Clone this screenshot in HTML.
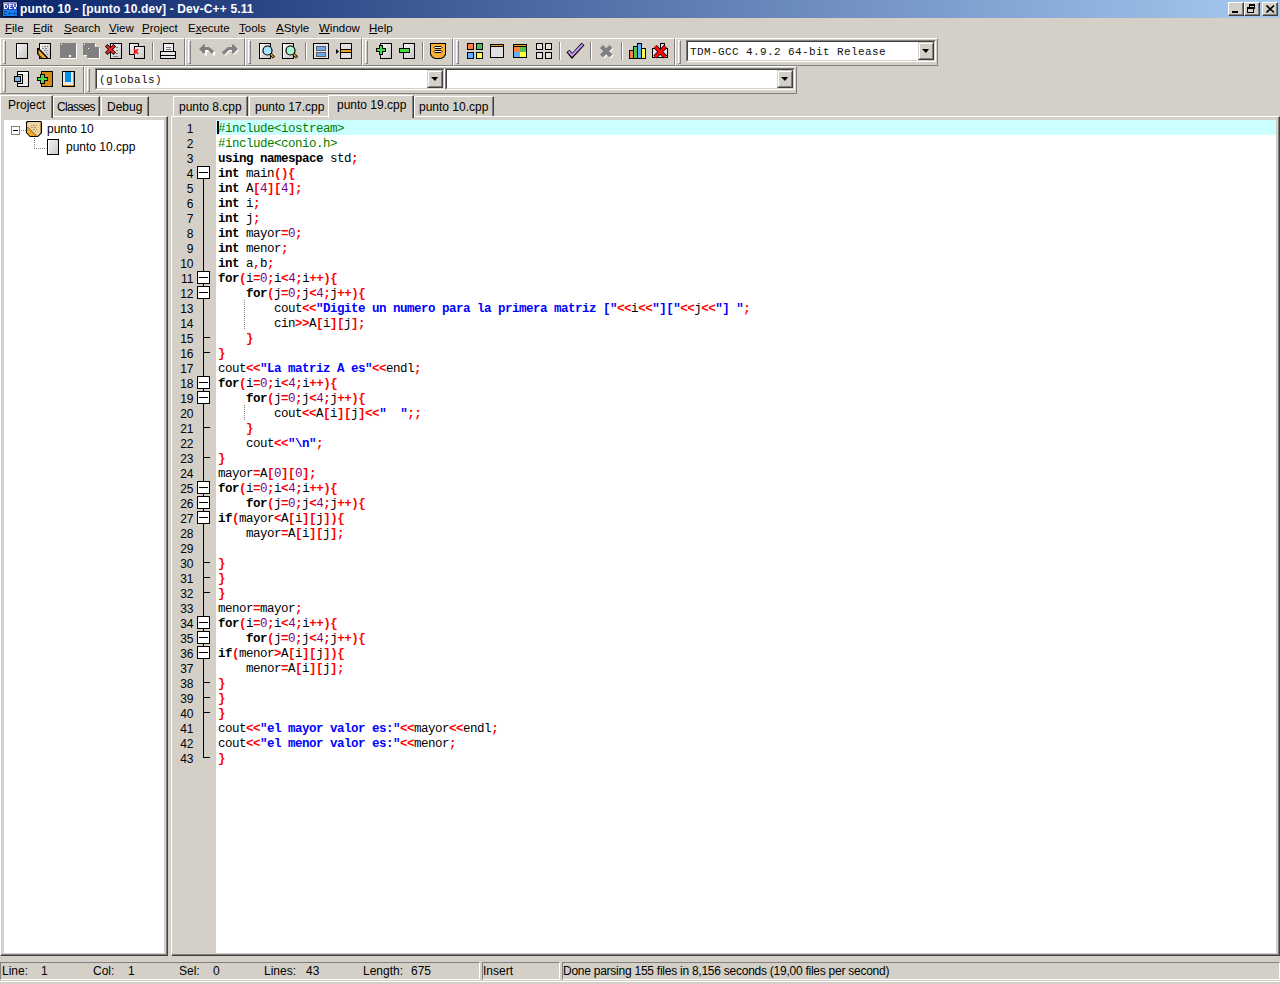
<!DOCTYPE html>
<html><head><meta charset="utf-8">
<style>
*{margin:0;padding:0;box-sizing:border-box}
html,body{width:1280px;height:984px;overflow:hidden;background:#d4d0c8;font-family:"Liberation Sans",sans-serif;font-size:12px;color:#000}
body{position:relative}
.a{position:absolute}
#title{left:0;top:0;width:1280px;height:18px;background:linear-gradient(to right,#0a246a 0%,#a6caf0 100%)}
#title .t{left:20px;top:1px;color:#fff;font-weight:bold;font-size:12px;letter-spacing:0.14px;line-height:16px;white-space:nowrap}
.cb{top:2px;width:16px;height:14px;background:#d4d0c8;border-top:1px solid #fff;border-left:1px solid #fff;border-right:1px solid #404040;border-bottom:1px solid #404040;box-shadow:inset -1px -1px 0 #808080}
.menu span{position:absolute;top:21px;line-height:14px;font-size:11.5px;white-space:nowrap}
.menu u{text-decoration:underline}
.band{height:28px;border-top:1px solid #fff;border-left:1px solid #fff;border-bottom:1px solid #808080;border-right:1px solid #808080}
.grip{top:1px;width:3px;height:24px;border-left:1px solid #fff;border-top:1px solid #fff;border-right:1px solid #808080;border-bottom:1px solid #808080}
.sep{top:3px;width:2px;height:18px;border-left:1px solid #808080;border-right:1px solid #fff}
.ic{top:4px;width:16px;height:16px;overflow:visible}
.combo{height:22px;background:#fff;border-top:1px solid #808080;border-left:1px solid #808080;border-right:1px solid #fff;border-bottom:1px solid #fff}
.combo .in{left:0;top:0;right:0;bottom:0;border-top:1px solid #404040;border-left:1px solid #404040;border-right:1px solid #d4d0c8;border-bottom:1px solid #d4d0c8}
.dd{right:0;top:0;width:16px;height:18px;background:#d4d0c8;border-top:1px solid #d4d0c8;border-left:1px solid #d4d0c8;border-right:1px solid #404040;border-bottom:1px solid #404040}
.dd .ddi{left:0;top:0;right:0;bottom:0;border-top:1px solid #fff;border-left:1px solid #fff;border-right:1px solid #808080;border-bottom:1px solid #808080}
.dd .arr{left:3px;top:6px;width:0;height:0;border-left:4px solid transparent;border-right:3px solid transparent;border-top:4px solid #000}
.ctext{font-family:"Liberation Mono",monospace;font-size:11px;letter-spacing:0.4px;line-height:14px;white-space:pre;color:#101010}
.tab{height:20px;white-space:nowrap;border-top:1px solid #fff;border-left:1px solid #fff;border-right:1px solid #404040;box-shadow:inset -1px 0 0 #808080}
.tab span{position:absolute;top:3px;line-height:14px}
.sheet{border-top:1px solid #fff;border-left:1px solid #fff;border-right:1px solid #404040;border-bottom:1px solid #404040;box-shadow:inset -1px -1px 0 #808080}
#code{left:218px;top:122px;font-family:"Liberation Mono",monospace;font-size:12.5px;letter-spacing:-0.5px;line-height:15px;white-space:pre}
#code div{height:15px}
.k{font-weight:bold}
.s{font-weight:bold;color:#0000ff}
.y{font-weight:bold;color:#ff0000}
.n{color:#800080}
.p{color:#008000}
#nums{left:172px;top:122px;width:21.5px;text-align:right;font-size:12px;line-height:15px}
#nums div{height:15px}
.st{top:962px;height:18px;white-space:nowrap;border-top:1px solid #808080;border-left:1px solid #808080;border-right:1px solid #fff;border-bottom:1px solid #fff}
.st span{position:absolute;top:1px;line-height:14px}
</style></head><body>
<div id="title" class="a">
  <svg class="a" style="left:2px;top:1px" width="16" height="16" viewBox="0 0 16 16" shape-rendering="crispEdges">
    <rect x="0" y="0" width="16" height="16" fill="#0a0f28"/>
    <rect x="1" y="1" width="14" height="2" fill="#9090d8"/>
    <rect x="1" y="3" width="14" height="3" fill="#6068c0"/>
    <rect x="1" y="6" width="14" height="3" fill="#2a48c8"/>
    <rect x="1" y="9" width="14" height="6" fill="#1680f0"/>
    <g fill="#f4f4ff"><rect x="2" y="3" width="1" height="5"/><rect x="3" y="3" width="2" height="1"/><rect x="3" y="7" width="2" height="1"/><rect x="5" y="4" width="1" height="3"/>
    <rect x="7" y="3" width="1" height="5"/><rect x="8" y="3" width="2" height="1"/><rect x="8" y="5" width="1" height="1"/><rect x="8" y="7" width="2" height="1"/>
    <rect x="11" y="3" width="1" height="3"/><rect x="14" y="3" width="1" height="3"/><rect x="12" y="6" width="2" height="2"/></g>
    <g fill="#0a50a8"><rect x="2" y="10" width="1" height="4"/><rect x="3" y="10" width="2" height="1"/><rect x="3" y="13" width="2" height="1"/>
    <rect x="6" y="12" width="4" height="1"/><rect x="7" y="11" width="1" height="3"/><rect x="11" y="12" width="4" height="1"/><rect x="12" y="11" width="1" height="3"/></g>
  </svg>
  <div class="a t">punto 10 - [punto 10.dev] - Dev-C++ 5.11</div>
  <div class="a cb" style="left:1228px"><div class="a" style="left:3px;top:8px;width:6px;height:2px;background:#000"></div></div>
  <div class="a cb" style="left:1244px">
    <div class="a" style="left:4px;top:1px;width:6px;height:5px;border:1px solid #000;border-top-width:2px"></div>
    <div class="a" style="left:2px;top:4px;width:7px;height:6px;border:1px solid #000;border-top-width:2px;background:#d4d0c8"></div>
  </div>
  <div class="a cb" style="left:1262px">
    <svg class="a" style="left:3px;top:2px" width="9" height="8" viewBox="0 0 9 8"><path d="M0.5 0.5 L8 7.5 M8 0.5 L0.5 7.5" stroke="#000" stroke-width="1.6"/></svg>
  </div>
</div>
<div class="menu">
  <span style="left:5px"><u>F</u>ile</span><span style="left:33px"><u>E</u>dit</span><span style="left:64px"><u>S</u>earch</span><span style="left:109px"><u>V</u>iew</span><span style="left:142px"><u>P</u>roject</span><span style="left:188px">E<u>x</u>ecute</span><span style="left:239px"><u>T</u>ools</span><span style="left:276px"><u>A</u>Style</span><span style="left:319px"><u>W</u>indow</span><span style="left:369px"><u>H</u>elp</span>
</div>

<!-- TOOLBARS -->
<!-- row 1 bands -->
<div class="a band" style="left:0;top:38px;width:185px"></div>
<div class="a band" style="left:185px;top:38px;width:60px"></div>
<div class="a band" style="left:245px;top:38px;width:117px"></div>
<div class="a band" style="left:362px;top:38px;width:91px"></div>
<div class="a band" style="left:453px;top:38px;width:222px"></div>
<div class="a band" style="left:675px;top:38px;width:263px"></div>
<!-- row 2 bands -->
<div class="a band" style="left:0;top:66px;width:84px"></div>
<div class="a band" style="left:84px;top:66px;width:713px"></div>
<!-- grips -->
<div class="a grip" style="left:3px;top:40px"></div>
<div class="a grip" style="left:188px;top:40px"></div>
<div class="a grip" style="left:248px;top:40px"></div>
<div class="a grip" style="left:365px;top:40px"></div>
<div class="a grip" style="left:456px;top:40px"></div>
<div class="a grip" style="left:678px;top:40px"></div>
<div class="a grip" style="left:3px;top:68px"></div>
<div class="a grip" style="left:87px;top:68px"></div>
<!-- separators -->
<div class="a sep" style="left:152px;top:42px"></div>
<div class="a sep" style="left:305px;top:42px"></div>
<div class="a sep" style="left:422px;top:42px"></div>
<div class="a sep" style="left:559px;top:42px"></div>
<div class="a sep" style="left:590px;top:42px"></div>
<div class="a sep" style="left:621px;top:42px"></div>
<!-- combos -->
<div class="a combo" style="left:686px;top:40px;width:250px"><div class="a in"></div><div class="a ctext" style="left:3px;top:4px">TDM-GCC 4.9.2 64-bit Release</div><div class="a dd" style="right:1px;top:1px"><div class="a ddi"></div><div class="a arr"></div></div></div>
<div class="a combo" style="left:95px;top:68px;width:350px"><div class="a in"></div><div class="a ctext" style="left:3px;top:4px">(globals)</div><div class="a dd" style="right:1px;top:1px"><div class="a ddi"></div><div class="a arr"></div></div></div>
<div class="a combo" style="left:445px;top:68px;width:350px"><div class="a in"></div><div class="a dd" style="right:1px;top:1px"><div class="a ddi"></div><div class="a arr"></div></div></div>

<svg class="a" style="left:0;top:0" width="960" height="96" viewBox="0 0 960 96" shape-rendering="crispEdges">
<defs>
<linearGradient id="gdoc" x1="0" y1="0" x2="1" y2="1"><stop offset="0" stop-color="#f4f4f4"/><stop offset="1" stop-color="#c8c8c8"/></linearGradient>
</defs>
<!-- 1 new -->
<rect x="16" y="43" width="12" height="16" fill="#000"/>
<rect x="17" y="44" width="10" height="14" fill="url(#gdoc)"/>
<rect x="17" y="44" width="1" height="14" fill="#fff"/>
<!-- 2 open -->
<rect x="39" y="43" width="12" height="16" fill="#000"/>
<rect x="40" y="44" width="10" height="14" fill="url(#gdoc)"/>
<rect x="40" y="44" width="1" height="14" fill="#fff"/>
<g fill="#808080"><rect x="42" y="46" width="1" height="1"/><rect x="44" y="46" width="2" height="1"/><rect x="47" y="46" width="1" height="1"/><rect x="42" y="48" width="2" height="1"/><rect x="45" y="48" width="2" height="1"/><rect x="44" y="50" width="2" height="1"/><rect x="47" y="50" width="1" height="1"/><rect x="46" y="52" width="1" height="1"/><rect x="47" y="54" width="1" height="1"/></g>
<path d="M37 48 L39 48 L48 57.5 L48 59 L42 59 L37 54 Z" fill="#000" shape-rendering="auto"/>
<path d="M38.5 49.5 L46.5 58 L42.5 58 L38.5 54 Z" fill="#f8a820" shape-rendering="auto"/>
<!-- 3 save disabled -->
<rect x="61" y="44" width="16" height="15" fill="#fff"/>
<rect x="60" y="43" width="16" height="15" fill="#808080"/>
<rect x="61" y="44" width="1" height="1" fill="#fff"/><rect x="69" y="55" width="2" height="2" fill="#fff"/>
<!-- 4 saveall disabled -->
<rect x="84" y="44" width="12" height="12" fill="#fff"/>
<rect x="83" y="43" width="12" height="12" fill="#808080"/>
<rect x="88" y="48" width="12" height="11" fill="#fff"/>
<rect x="87" y="47" width="12" height="11" fill="#808080"/>
<rect x="84" y="44" width="1" height="1" fill="#fff"/><rect x="88" y="48" width="1" height="1" fill="#fff"/>
<!-- 5 close -->
<rect x="110" y="43" width="12" height="16" fill="#000"/>
<rect x="111" y="44" width="10" height="14" fill="url(#gdoc)"/>
<g fill="#808080"><rect x="116" y="47" width="2" height="1"/><rect x="116" y="50" width="2" height="1"/><rect x="116" y="53" width="2" height="1"/><rect x="113" y="56" width="5" height="1"/></g>
<path d="M107.5 46.5 L113.5 52.5 M113.5 46.5 L107.5 52.5" stroke="#000" stroke-width="3.6" stroke-linecap="square" shape-rendering="auto"/>
<path d="M107.5 46.5 L113.5 52.5 M113.5 46.5 L107.5 52.5" stroke="#ff2020" stroke-width="2" stroke-linecap="square" shape-rendering="auto"/>
<!-- 6 close all -->
<rect x="129" y="43" width="10" height="12" fill="#000"/>
<rect x="130" y="44" width="8" height="10" fill="url(#gdoc)"/>
<rect x="134" y="46" width="11" height="13" fill="#000"/>
<rect x="135" y="47" width="9" height="11" fill="url(#gdoc)"/>
<path d="M134 49 L138 54 M138 49 L134 54" stroke="#ff2020" stroke-width="2" shape-rendering="auto"/>
<!-- 7 print -->
<rect x="163" y="43" width="11" height="9" fill="#000"/>
<rect x="164" y="44" width="9" height="7" fill="#f0f0f0"/>
<rect x="166" y="47" width="5" height="1" fill="#808080"/><rect x="166" y="49" width="5" height="1" fill="#808080"/>
<rect x="160" y="51" width="16" height="8" fill="#000"/>
<rect x="161" y="52" width="14" height="3" fill="#e8e8e8"/>
<rect x="161" y="56" width="14" height="2" fill="#e8e8e8"/>
<!-- 8 undo -->
<path d="M200 50 L205 45 L206 46 L206 48 L210 48 L215 52 L213 55 L209 51 L206 51 L206 54 L205 55 Z" fill="#fff" transform="translate(1,1)" shape-rendering="auto"/>
<path d="M199 49 L204 44 L205 45 L205 47 L209 47 L214 51 L212 54 L208 50 L205 50 L205 53 L204 54 Z" fill="#808080" shape-rendering="auto"/>
<!-- 9 redo -->
<path d="M238 49 L233 44 L232 45 L232 47 L228 47 L222 52 L224 55 L229 50 L232 50 L232 53 L233 54 Z" fill="#fff" transform="translate(1,1)" shape-rendering="auto"/>
<path d="M238 49 L233 44 L232 45 L232 47 L228 47 L222 52 L224 55 L229 50 L232 50 L232 53 L233 54 Z" fill="#808080" shape-rendering="auto"/>
<!-- 10 find -->
<rect x="259" y="43" width="12" height="16" fill="#000"/>
<rect x="260" y="44" width="10" height="14" fill="url(#gdoc)"/>
<rect x="260" y="44" width="1" height="14" fill="#fff"/>
<circle cx="267.5" cy="50.5" r="4.5" fill="#a8e4ff" stroke="#000" stroke-width="1.2" shape-rendering="auto"/>
<path d="M270.5 54 L274 57.5" stroke="#000" stroke-width="3" shape-rendering="auto"/>
<path d="M270.8 54.3 L273.5 57" stroke="#f0a020" stroke-width="1.5" shape-rendering="auto"/>
<!-- 11 replace -->
<rect x="282" y="43" width="12" height="16" fill="#000"/>
<rect x="283" y="44" width="10" height="14" fill="url(#gdoc)"/>
<rect x="283" y="44" width="1" height="14" fill="#fff"/>
<circle cx="290.5" cy="50.5" r="4.5" fill="#a8f4cc" stroke="#000" stroke-width="1.2" shape-rendering="auto"/>
<path d="M293.5 54 L297 57.5" stroke="#000" stroke-width="3" shape-rendering="auto"/>
<path d="M293.8 54.3 L296.5 57" stroke="#f0a020" stroke-width="1.5" shape-rendering="auto"/>
<!-- 12 -->
<rect x="313" y="43" width="16" height="16" fill="#000"/>
<rect x="314" y="44" width="14" height="14" fill="#e4e4e4"/>
<rect x="316" y="46" width="10" height="5" fill="#606060"/><rect x="317" y="47" width="8" height="3" fill="#70a8f0"/>
<rect x="316" y="52" width="10" height="5" fill="#606060"/><rect x="317" y="53" width="8" height="3" fill="#70a8f0"/>
<!-- 13 -->
<path d="M336 49 L339 51.5 L336 54 Z" fill="#000" shape-rendering="auto"/>
<rect x="340" y="43" width="12" height="16" fill="#000"/>
<rect x="341" y="44" width="10" height="14" fill="#e0e0e0"/>
<rect x="341" y="50" width="10" height="2" fill="#f0a020"/>
<rect x="341" y="49" width="10" height="1" fill="#000"/><rect x="341" y="52" width="10" height="1" fill="#000"/>
<!-- 14 add -->
<rect x="380" y="43" width="12" height="16" fill="#000"/>
<rect x="381" y="44" width="10" height="14" fill="url(#gdoc)"/>
<path d="M376 48 L379 48 L379 45 L383 45 L383 48 L386 48 L386 52 L383 52 L383 55 L379 55 L379 52 L376 52 Z" fill="#000"/>
<path d="M377 49 L380 49 L380 46 L382 46 L382 49 L385 49 L385 51 L382 51 L382 54 L380 54 L380 51 L377 51 Z" fill="#40e040"/>
<!-- 15 remove -->
<rect x="403" y="43" width="12" height="16" fill="#000"/>
<rect x="404" y="44" width="10" height="14" fill="url(#gdoc)"/>
<rect x="399" y="48" width="11" height="5" fill="#000"/>
<rect x="400" y="49" width="9" height="3" fill="#40e040"/>
<!-- 16 options -->
<path d="M430 43 L446 43 L446 54.5 L444 57.5 L441 59 L435 59 L432 57.5 L430 54.5 Z" fill="#000" shape-rendering="auto"/>
<path d="M431 44 L445 44 L445 54 L443.3 56.8 L440.6 58 L435.4 58 L432.7 56.8 L431 54 Z" fill="#f8b038" shape-rendering="auto"/>
<path d="M434 47.5 L435 46.5 L441 46.5 L442 47.5 L441 48.5 L435 48.5 Z" fill="#fff" stroke="#000" stroke-width="1" shape-rendering="auto"/>
<path d="M434 51.5 L435 50.5 L441 50.5 L442 51.5 L441 52.5 L435 52.5 Z" fill="#fff" stroke="#000" stroke-width="1" shape-rendering="auto"/>
<!-- 17 four colors -->
<rect x="467" y="43" width="7" height="7" fill="#000"/><rect x="468" y="44" width="5" height="5" fill="#ff8040"/>
<rect x="476" y="43" width="7" height="7" fill="#000"/><rect x="477" y="44" width="5" height="5" fill="#50c050"/>
<rect x="467" y="52" width="7" height="7" fill="#000"/><rect x="468" y="53" width="5" height="5" fill="#60b0ff"/>
<rect x="476" y="52" width="7" height="7" fill="#000"/><rect x="477" y="53" width="5" height="5" fill="#ffff40"/>
<!-- 18 window -->
<rect x="490" y="44" width="14" height="14" fill="#000"/><rect x="491" y="45" width="12" height="12" fill="#e0e0e0"/><rect x="491" y="45" width="12" height="1" fill="#f0a020"/><rect x="491" y="46" width="12" height="1" fill="#000"/>
<!-- 19 window colors -->
<rect x="513" y="44" width="14" height="14" fill="#000"/><rect x="514" y="45" width="12" height="1" fill="#f0a020"/>
<rect x="514" y="47" width="6" height="5" fill="#ff8040"/><rect x="520" y="47" width="6" height="5" fill="#50c050"/>
<rect x="514" y="52" width="6" height="5" fill="#60b0ff"/><rect x="520" y="52" width="6" height="5" fill="#ffff40"/>
<!-- 20 gray squares -->
<rect x="536" y="43" width="7" height="7" fill="#000"/><rect x="537" y="44" width="5" height="5" fill="#e0e0e0"/>
<rect x="545" y="43" width="7" height="7" fill="#000"/><rect x="546" y="44" width="5" height="5" fill="#e0e0e0"/>
<rect x="536" y="52" width="7" height="7" fill="#000"/><rect x="537" y="53" width="5" height="5" fill="#e0e0e0"/>
<rect x="545" y="52" width="7" height="7" fill="#000"/><rect x="546" y="53" width="5" height="5" fill="#e0e0e0"/>
<!-- 21 check -->
<path d="M568 51 L572 56 L583 44" stroke="#000" stroke-width="4" fill="none" shape-rendering="auto"/>
<path d="M568.5 51.5 L572 55.5 L582.5 44.5" stroke="#c898f8" stroke-width="2" fill="none" shape-rendering="auto"/>
<!-- 22 x disabled -->
<path d="M601.5 46.5 L611 56 M611 46.5 L601.5 56" stroke="#fff" stroke-width="4.4" transform="translate(1,1)" shape-rendering="auto"/>
<path d="M601.5 46.5 L611 56 M611 46.5 L601.5 56" stroke="#808080" stroke-width="4.4" shape-rendering="auto"/>
<!-- 23 chart -->
<rect x="629" y="43" width="17" height="16" fill="none"/>
<rect x="629" y="50" width="5" height="9" fill="#000"/><rect x="630" y="51" width="3" height="7" fill="#ff8040"/>
<rect x="633" y="46" width="5" height="13" fill="#000"/><rect x="634" y="47" width="3" height="11" fill="#50c050"/>
<rect x="637" y="43" width="5" height="16" fill="#000"/><rect x="638" y="44" width="3" height="14" fill="#60b0ff"/>
<rect x="641" y="48" width="5" height="11" fill="#000"/><rect x="642" y="49" width="3" height="9" fill="#ffff40"/>
<!-- 24 delete -->
<rect x="652" y="48" width="16" height="10" fill="#000"/><rect x="653" y="49" width="14" height="8" fill="#e4e4e4"/>
<rect x="660" y="43" width="5" height="6" fill="#000"/><rect x="661" y="44" width="3" height="5" fill="#e4e4e4"/>
<path d="M655 46.5 L665.5 57 M665.5 46.5 L655 57" stroke="#000" stroke-width="4.4" shape-rendering="auto"/>
<path d="M655 46.5 L665.5 57 M665.5 46.5 L655 57" stroke="#ff0808" stroke-width="3" shape-rendering="auto"/>
<!-- row 2 icons -->
<rect x="17" y="71" width="12" height="16" fill="#000"/><rect x="18" y="72" width="10" height="14" fill="#e8e8e8"/><rect x="17" y="75" width="5" height="8" fill="#000"/><rect x="18" y="74" width="3" height="10" fill="#d4d0c8" opacity="0"/>
<rect x="18" y="72" width="10" height="2" fill="#fff"/><rect x="22" y="74" width="1" height="10" fill="#000"/><rect x="18" y="74" width="4" height="10" fill="#d4d0c8"/><rect x="18" y="74" width="5" height="1" fill="#000"/><rect x="18" y="83" width="5" height="1" fill="#000"/>
<rect x="14" y="76" width="7" height="6" fill="#000"/><rect x="15" y="77" width="5" height="4" fill="#80b0f0"/>
<rect x="41" y="71" width="12" height="16" fill="#000"/><rect x="42" y="72" width="10" height="14" fill="#d88a10"/>
<path d="M37 77 L40 77 L40 74 L45 74 L45 77 L48 77 L48 81 L45 81 L45 84 L40 84 L40 81 L37 81 Z" fill="#000"/>
<path d="M38 78 L41 78 L41 75 L44 75 L44 78 L47 78 L47 80 L44 80 L44 83 L41 83 L41 80 L38 80 Z" fill="#40e040"/>
<rect x="62" y="71" width="13" height="16" fill="#000"/><rect x="63" y="72" width="11" height="14" fill="#e08a10"/><rect x="63" y="72" width="10" height="13" fill="#e8e8e8"/><rect x="65" y="72" width="6" height="10" fill="#0890e0"/>
</svg>


<!-- TABS -->
<!-- left tabs -->
<div class="a tab" style="left:53px;top:96px;width:47px"><span style="left:3px;letter-spacing:-0.7px">Classes</span></div>
<div class="a tab" style="left:101px;top:96px;width:48px"><span style="left:5px">Debug</span></div>
<div class="a tab" style="left:0;top:95px;width:53px;height:23px;background:#d4d0c8;z-index:2"><span style="left:7px;top:2px">Project</span></div>
<!-- editor tabs -->
<div class="a tab" style="left:173px;top:96px;width:75px"><span style="left:5px">punto 8.cpp</span></div>
<div class="a tab" style="left:249px;top:96px;width:81px"><span style="left:5px">punto 17.cpp</span></div>
<div class="a tab" style="left:414px;top:96px;width:80px"><span style="left:4px">punto 10.cpp</span></div>
<div class="a tab" style="left:328px;top:95px;width:86px;height:23px;background:#d4d0c8;z-index:2"><span style="left:8px;top:2px">punto 19.cpp</span></div>


<!-- editor sheet -->
<div class="a sheet" style="left:0;top:116px;width:168px;height:840px;background:#d4d0c8"></div>
<div class="a" style="left:4px;top:120px;width:160px;height:833px;background:#fff"></div>
<svg class="a" style="left:0;top:115px" width="160" height="50" viewBox="0 0 160 50" shape-rendering="crispEdges">
<rect x="11.5" y="11.5" width="8" height="8" fill="#fff" stroke="#808080"/>
<rect x="13" y="15" width="5" height="1" fill="#000"/>
<g fill="#808080"><rect x="21" y="15" width="1" height="1"/><rect x="23" y="15" width="1" height="1"/><rect x="25" y="15" width="1" height="1"/>
<rect x="34" y="23" width="1" height="1"/><rect x="34" y="25" width="1" height="1"/><rect x="34" y="27" width="1" height="1"/><rect x="34" y="29" width="1" height="1"/><rect x="34" y="31" width="1" height="1"/><rect x="34" y="33" width="1" height="1"/>
<rect x="36" y="33" width="1" height="1"/><rect x="38" y="33" width="1" height="1"/><rect x="40" y="33" width="1" height="1"/><rect x="42" y="33" width="1" height="1"/><rect x="44" y="33" width="1" height="1"/></g>
<path d="M27 6 L41 6 L42 7 L42 18 L40 20 L38 22 L30 22 L28 20 L26 18 L26 7 Z" fill="#000" shape-rendering="auto"/>
<path d="M28 7 L40 7 L41 8 L41 17.5 L39 19.5 L37.5 21 L30.5 21 L29 19.5 L27 17.5 L27 8 Z" fill="#ecd4a4" shape-rendering="auto"/>
<path d="M27 12 L36.5 21 L30.5 21 L27 17.5 Z" fill="#f8a820" shape-rendering="auto"/>
<path d="M27 11.5 L37 21.5" stroke="#7a5010" stroke-width="1" shape-rendering="auto"/>
<rect x="40" y="7" width="1" height="11" fill="#b89050"/>
<g fill="#b89060"><rect x="31" y="10" width="1" height="1"/><rect x="33" y="10" width="2" height="1"/><rect x="36" y="10" width="1" height="1"/><rect x="31" y="12" width="2" height="1"/><rect x="34" y="12" width="2" height="1"/><rect x="33" y="14" width="2" height="1"/><rect x="36" y="14" width="1" height="1"/><rect x="35" y="16" width="1" height="1"/></g>
<rect x="47" y="24" width="12" height="16" fill="#000"/>
<rect x="48" y="25" width="10" height="14" fill="url(#gdoc)"/>
<rect x="48" y="25" width="1" height="14" fill="#fff"/>
</svg>
<div class="a" style="left:47px;top:122px;line-height:14px;white-space:nowrap">punto 10</div>
<div class="a" style="left:66px;top:140px;line-height:14px;white-space:nowrap">punto 10.cpp</div>


<div class="a sheet" style="left:171px;top:116px;width:1109px;height:840px;background:#d4d0c8"></div>
<div class="a" style="left:216px;top:120px;width:1060px;height:833px;background:#fff"></div>
<div class="a" style="left:216px;top:120px;width:1060px;height:15px;background:#ccffff"></div>
<div class="a" style="left:217px;top:121px;width:2px;height:13px;background:#200000"></div>
<div class="a" style="left:244px;top:300px;width:1px;height:30px;background-image:linear-gradient(#808080 50%,transparent 50%);background-size:1px 2px"></div>
<div class="a" style="left:244px;top:405px;width:1px;height:15px;background-image:linear-gradient(#808080 50%,transparent 50%);background-size:1px 2px"></div>
<div id="nums" class="a"><div>1</div><div>2</div><div>3</div><div>4</div><div>5</div><div>6</div><div>7</div><div>8</div><div>9</div><div>10</div><div>11</div><div>12</div><div>13</div><div>14</div><div>15</div><div>16</div><div>17</div><div>18</div><div>19</div><div>20</div><div>21</div><div>22</div><div>23</div><div>24</div><div>25</div><div>26</div><div>27</div><div>28</div><div>29</div><div>30</div><div>31</div><div>32</div><div>33</div><div>34</div><div>35</div><div>36</div><div>37</div><div>38</div><div>39</div><div>40</div><div>41</div><div>42</div><div>43</div></div>
<svg class="a" style="left:172px;top:120px" width="44" height="660" viewBox="0 0 44 660" shape-rendering="crispEdges">
<rect x="31" y="59" width="1" height="579" fill="#000"/>
<rect x="31" y="217" width="7" height="1" fill="#000"/>
<rect x="31" y="232" width="7" height="1" fill="#000"/>
<rect x="31" y="307" width="7" height="1" fill="#000"/>
<rect x="31" y="337" width="7" height="1" fill="#000"/>
<rect x="31" y="442" width="7" height="1" fill="#000"/>
<rect x="31" y="457" width="7" height="1" fill="#000"/>
<rect x="31" y="472" width="7" height="1" fill="#000"/>
<rect x="31" y="562" width="7" height="1" fill="#000"/>
<rect x="31" y="577" width="7" height="1" fill="#000"/>
<rect x="31" y="592" width="7" height="1" fill="#000"/>
<rect x="31" y="637" width="7" height="1" fill="#000"/>
<rect x="25.5" y="46.5" width="12" height="12" fill="#fff" stroke="#000" stroke-width="1"/>
<rect x="27" y="52" width="9" height="1" fill="#000"/>
<rect x="25.5" y="151.5" width="12" height="12" fill="#fff" stroke="#000" stroke-width="1"/>
<rect x="27" y="157" width="9" height="1" fill="#000"/>
<rect x="25.5" y="166.5" width="12" height="12" fill="#fff" stroke="#000" stroke-width="1"/>
<rect x="27" y="172" width="9" height="1" fill="#000"/>
<rect x="25.5" y="256.5" width="12" height="12" fill="#fff" stroke="#000" stroke-width="1"/>
<rect x="27" y="262" width="9" height="1" fill="#000"/>
<rect x="25.5" y="271.5" width="12" height="12" fill="#fff" stroke="#000" stroke-width="1"/>
<rect x="27" y="277" width="9" height="1" fill="#000"/>
<rect x="25.5" y="361.5" width="12" height="12" fill="#fff" stroke="#000" stroke-width="1"/>
<rect x="27" y="367" width="9" height="1" fill="#000"/>
<rect x="25.5" y="376.5" width="12" height="12" fill="#fff" stroke="#000" stroke-width="1"/>
<rect x="27" y="382" width="9" height="1" fill="#000"/>
<rect x="25.5" y="391.5" width="12" height="12" fill="#fff" stroke="#000" stroke-width="1"/>
<rect x="27" y="397" width="9" height="1" fill="#000"/>
<rect x="25.5" y="496.5" width="12" height="12" fill="#fff" stroke="#000" stroke-width="1"/>
<rect x="27" y="502" width="9" height="1" fill="#000"/>
<rect x="25.5" y="511.5" width="12" height="12" fill="#fff" stroke="#000" stroke-width="1"/>
<rect x="27" y="517" width="9" height="1" fill="#000"/>
<rect x="25.5" y="526.5" width="12" height="12" fill="#fff" stroke="#000" stroke-width="1"/>
<rect x="27" y="532" width="9" height="1" fill="#000"/>
</svg>
<div id="code" class="a"><div><span class="p">#include&lt;iostream&gt;</span></div><div><span class="p">#include&lt;conio.h&gt;</span></div><div><span class="k">using</span> <span class="k">namespace</span> std<span class="y">;</span></div><div><span class="k">int</span> main<span class="y">(){</span></div><div><span class="k">int</span> A<span class="y">[</span><span class="n">4</span><span class="y">][</span><span class="n">4</span><span class="y">];</span></div><div><span class="k">int</span> i<span class="y">;</span></div><div><span class="k">int</span> j<span class="y">;</span></div><div><span class="k">int</span> mayor<span class="y">=</span><span class="n">0</span><span class="y">;</span></div><div><span class="k">int</span> menor<span class="y">;</span></div><div><span class="k">int</span> a<span class="y">,</span>b<span class="y">;</span></div><div><span class="k">for</span><span class="y">(</span>i<span class="y">=</span><span class="n">0</span><span class="y">;</span>i<span class="y">&lt;</span><span class="n">4</span><span class="y">;</span>i<span class="y">++){</span></div><div>    <span class="k">for</span><span class="y">(</span>j<span class="y">=</span><span class="n">0</span><span class="y">;</span>j<span class="y">&lt;</span><span class="n">4</span><span class="y">;</span>j<span class="y">++){</span></div><div>        cout<span class="y">&lt;&lt;</span><span class="s">&quot;Digite un numero para la primera matriz [&quot;</span><span class="y">&lt;&lt;</span>i<span class="y">&lt;&lt;</span><span class="s">&quot;][&quot;</span><span class="y">&lt;&lt;</span>j<span class="y">&lt;&lt;</span><span class="s">&quot;] &quot;</span><span class="y">;</span></div><div>        cin<span class="y">&gt;&gt;</span>A<span class="y">[</span>i<span class="y">][</span>j<span class="y">];</span></div><div>    <span class="y">}</span></div><div><span class="y">}</span></div><div>cout<span class="y">&lt;&lt;</span><span class="s">&quot;La matriz A es&quot;</span><span class="y">&lt;&lt;</span>endl<span class="y">;</span></div><div><span class="k">for</span><span class="y">(</span>i<span class="y">=</span><span class="n">0</span><span class="y">;</span>i<span class="y">&lt;</span><span class="n">4</span><span class="y">;</span>i<span class="y">++){</span></div><div>    <span class="k">for</span><span class="y">(</span>j<span class="y">=</span><span class="n">0</span><span class="y">;</span>j<span class="y">&lt;</span><span class="n">4</span><span class="y">;</span>j<span class="y">++){</span></div><div>        cout<span class="y">&lt;&lt;</span>A<span class="y">[</span>i<span class="y">][</span>j<span class="y">]&lt;&lt;</span><span class="s">&quot;  &quot;</span><span class="y">;;</span></div><div>    <span class="y">}</span></div><div>    cout<span class="y">&lt;&lt;</span><span class="s">&quot;\n&quot;</span><span class="y">;</span></div><div><span class="y">}</span></div><div>mayor<span class="y">=</span>A<span class="y">[</span><span class="n">0</span><span class="y">][</span><span class="n">0</span><span class="y">];</span></div><div><span class="k">for</span><span class="y">(</span>i<span class="y">=</span><span class="n">0</span><span class="y">;</span>i<span class="y">&lt;</span><span class="n">4</span><span class="y">;</span>i<span class="y">++){</span></div><div>    <span class="k">for</span><span class="y">(</span>j<span class="y">=</span><span class="n">0</span><span class="y">;</span>j<span class="y">&lt;</span><span class="n">4</span><span class="y">;</span>j<span class="y">++){</span></div><div><span class="k">if</span><span class="y">(</span>mayor<span class="y">&lt;</span>A<span class="y">[</span>i<span class="y">][</span>j<span class="y">]){</span></div><div>    mayor<span class="y">=</span>A<span class="y">[</span>i<span class="y">][</span>j<span class="y">];</span></div><div></div><div><span class="y">}</span></div><div><span class="y">}</span></div><div><span class="y">}</span></div><div>menor<span class="y">=</span>mayor<span class="y">;</span></div><div><span class="k">for</span><span class="y">(</span>i<span class="y">=</span><span class="n">0</span><span class="y">;</span>i<span class="y">&lt;</span><span class="n">4</span><span class="y">;</span>i<span class="y">++){</span></div><div>    <span class="k">for</span><span class="y">(</span>j<span class="y">=</span><span class="n">0</span><span class="y">;</span>j<span class="y">&lt;</span><span class="n">4</span><span class="y">;</span>j<span class="y">++){</span></div><div><span class="k">if</span><span class="y">(</span>menor<span class="y">&gt;</span>A<span class="y">[</span>i<span class="y">][</span>j<span class="y">]){</span></div><div>    menor<span class="y">=</span>A<span class="y">[</span>i<span class="y">][</span>j<span class="y">];</span></div><div><span class="y">}</span></div><div><span class="y">}</span></div><div><span class="y">}</span></div><div>cout<span class="y">&lt;&lt;</span><span class="s">&quot;el mayor valor es:&quot;</span><span class="y">&lt;&lt;</span>mayor<span class="y">&lt;&lt;</span>endl<span class="y">;</span></div><div>cout<span class="y">&lt;&lt;</span><span class="s">&quot;el menor valor es:&quot;</span><span class="y">&lt;&lt;</span>menor<span class="y">;</span></div><div><span class="y">}</span></div></div>

<!-- status bar -->
<div class="a st" style="left:0;width:480px"><span style="left:1px">Line:</span><span style="left:40px">1</span><span style="left:92px">Col:</span><span style="left:127px">1</span><span style="left:178px">Sel:</span><span style="left:212px">0</span><span style="left:263px">Lines:</span><span style="left:305px">43</span><span style="left:362px">Length:</span><span style="left:410px">675</span></div>
<div class="a st" style="left:482px;width:78px"><span style="left:0px">Insert</span></div>
<div class="a st" style="left:562px;width:718px"><span style="left:0px;letter-spacing:-0.25px">Done parsing 155 files in 8,156 seconds (19,00 files per second)</span></div>
<div class="a" style="left:0;top:981px;width:1280px;height:1px;background:#fff"></div>
</body></html>
